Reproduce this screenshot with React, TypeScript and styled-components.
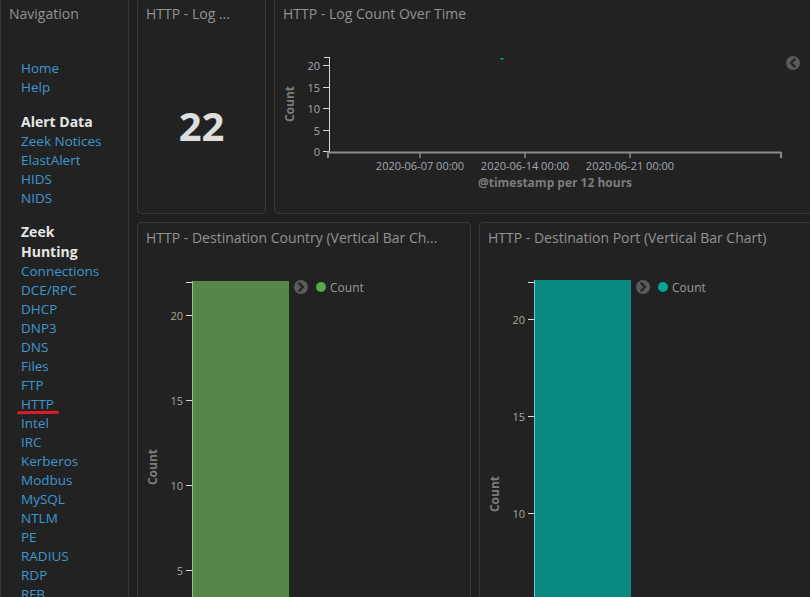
import React from "react";
import styled, { createGlobalStyle } from "styled-components";

const Global = createGlobalStyle`
  html, body { margin: 0; padding: 0; }
  body {
    background: #1f1f1f;
    overflow: hidden;
    font-family: "Open Sans", "DejaVu Sans", sans-serif;
  }
`;

const Dashboard = styled.div`
  display: grid;
  grid-template-columns: 129px 676px;
  column-gap: 8px;
  margin-top: -2px;
  width: 813px;
`;

const Panel = styled.div<{ $h?: number }>`
  box-sizing: border-box;
  background: #222222;
  border: 1px solid #383838;
  border-radius: 4px;
  height: ${(p) => (p.$h ? `${p.$h}px` : "auto")};
  overflow: hidden;
  display: flex;
  flex-direction: column;
  min-width: 0;
`;

const PanelTitle = styled.div`
  flex: none;
  padding: 6px 8px 0;
  line-height: 18px;
  font-size: 14px;
  color: #939393;
  white-space: nowrap;
`;

const NavBody = styled.div`
  padding: 36px 0 0 20px;
  width: 86px;
`;

const NavSection = styled.div`
  & + & {
    margin-top: 14.5px;
  }
`;

const NavHeading = styled.div`
  font-size: 14px;
  font-weight: 700;
  line-height: 20px;
  color: #e6e6e6;
`;

const NavLink = styled.a<{ $marked?: boolean }>`
  display: block;
  width: fit-content;
  position: relative;
  font-size: 13.5px;
  line-height: 19px;
  color: #3d98cf;
  text-decoration: none;
  ${(p) =>
    p.$marked &&
    `
    &::after {
      content: "";
      position: absolute;
      left: -4px;
      top: 15.5px;
      width: 42px;
      height: 2.5px;
      border-radius: 2px;
      background: #d81e2c;
      transform: rotate(-0.6deg);
    }
  `}
`;

const Right = styled.div`
  display: grid;
  grid-template-rows: 216px 400px;
  row-gap: 8px;
`;

const TopRow = styled.div`
  display: grid;
  grid-template-columns: 129px 539px;
  column-gap: 8px;
`;

const BottomRow = styled.div`
  display: grid;
  grid-template-columns: 334px 334px;
  column-gap: 8px;
`;

const MetricBody = styled.div`
  flex: 1;
  display: flex;
  align-items: center;
  justify-content: center;
  padding-top: 16px;
`;

const MetricValue = styled.div`
  font-size: 40px;
  font-weight: 700;
  line-height: 48px;
  color: #dedede;
`;

const ChartSvg = styled.svg`
  display: block;
  flex: none;
  font-family: "Open Sans", "DejaVu Sans", sans-serif;
`;

const navSections: { heading?: string[]; links: string[] }[] = [
  { links: ["Home", "Help"] },
  { heading: ["Alert Data"], links: ["Zeek Notices", "ElastAlert", "HIDS", "NIDS"] },
  {
    heading: ["Zeek Hunting"],
    links: [
      "Connections",
      "DCE/RPC",
      "DHCP",
      "DNP3",
      "DNS",
      "Files",
      "FTP",
      "HTTP",
      "Intel",
      "IRC",
      "Kerberos",
      "Modbus",
      "MySQL",
      "NTLM",
      "PE",
      "RADIUS",
      "RDP",
      "RFB",
      "SIP",
    ],
  },
];

const TICK = "#d8d8d8";
const LABEL_COOL = "#a3a9b2";
const LABEL_WARM = "#b0a698";
const AXIS_TITLE = "#7c7c7c";

function LegendToggle({ x, y, dir }: { x: number; y: number; dir: "left" | "right" }) {
  const d =
    dir === "left"
      ? `M${x + 1.6} ${y - 3.6} L${x - 2} ${y} L${x + 1.6} ${y + 3.6}`
      : `M${x - 1.6} ${y - 3.6} L${x + 2} ${y} L${x - 1.6} ${y + 3.6}`;
  return (
    <g>
      <circle cx={x} cy={y} r={7} fill="#5b5b5b" />
      <path d={d} fill="none" stroke="#262626" strokeWidth={2.4} strokeLinecap="round" strokeLinejoin="round" />
    </g>
  );
}

function LineChart() {
  const yTicks = [
    { v: "20", y: 42 },
    { v: "15", y: 64 },
    { v: "10", y: 85 },
    { v: "5", y: 107 },
    { v: "0", y: 128 },
  ];
  const xTicks = [
    { x: 145, t: "2020-06-07 00:00" },
    { x: 250, t: "2020-06-14 00:00" },
    { x: 355, t: "2020-06-21 00:00" },
  ];
  return (
    <ChartSvg width={537} height={190} viewBox="0 0 537 190">
      <text
        x={14}
        y={81}
        transform="rotate(-90 14 81)"
        textAnchor="middle"
        dominantBaseline="central"
        fontSize={12}
        fontWeight={700}
        fill={AXIS_TITLE}
      >
        Count
      </text>
      <line x1={54.5} y1={34} x2={54.5} y2={129} stroke={TICK} strokeWidth={1} />
      <line x1={49} y1={34.5} x2={54.5} y2={34.5} stroke={TICK} strokeWidth={1} />
      {yTicks.map((t) => (
        <g key={t.v}>
          <line x1={48} y1={t.y + 0.5} x2={54.5} y2={t.y + 0.5} stroke={TICK} strokeWidth={1} />
          <text x={45} y={t.y + 0.5} textAnchor="end" dominantBaseline="central" fontSize={11} fill={LABEL_COOL}>
            {t.v}
          </text>
        </g>
      ))}
      <line x1={52} y1={129.5} x2={506} y2={129.5} stroke="#8a8a8a" strokeWidth={2} />
      <line x1={53} y1={129} x2={53} y2={135} stroke="#8a8a8a" strokeWidth={2} />
      <line x1={506} y1={129} x2={506} y2={135} stroke="#8a8a8a" strokeWidth={2} />
      {xTicks.map((t) => (
        <g key={t.t}>
          <line x1={t.x} y1={129} x2={t.x} y2={135} stroke="#8a8a8a" strokeWidth={1.5} />
          <text x={t.x} y={142} textAnchor="middle" dominantBaseline="central" fontSize={11} fill={LABEL_COOL}>
            {t.t}
          </text>
        </g>
      ))}
      <text x={280} y={159.5} textAnchor="middle" dominantBaseline="central" fontSize={12} fontWeight={700} fill={AXIS_TITLE}>
        @timestamp per 12 hours
      </text>
      <rect x={225.5} y={35} width={3} height={1.5} fill="#00a69b" />
      <LegendToggle x={518} y={40} dir="left" />
    </ChartSvg>
  );
}

function BarChart({
  ticks,
  barTop,
  barColor,
  edgeColor,
  dotColor,
  countY,
}: {
  ticks: { v: string; y: number }[];
  barTop: number;
  barColor: string;
  edgeColor: string;
  dotColor: string;
  countY: number;
}) {
  return (
    <ChartSvg width={332} height={376} viewBox="0 0 332 376">
      <text
        x={14}
        y={countY}
        transform={`rotate(-90 14 ${countY})`}
        textAnchor="middle"
        dominantBaseline="central"
        fontSize={12}
        fontWeight={700}
        fill={AXIS_TITLE}
      >
        Count
      </text>
      <line x1={54.5} y1={34} x2={54.5} y2={376} stroke={TICK} strokeWidth={1} />
      <line x1={48} y1={35.5} x2={54.5} y2={35.5} stroke={TICK} strokeWidth={1} />
      {ticks.map((t) => (
        <g key={t.v}>
          <line x1={48} y1={t.y + 0.5} x2={54.5} y2={t.y + 0.5} stroke={TICK} strokeWidth={1} />
          <text x={45} y={t.y + 0.5} textAnchor="end" dominantBaseline="central" fontSize={11} fill={LABEL_WARM}>
            {t.v}
          </text>
        </g>
      ))}
      <rect x={54} y={barTop} width={97} height={376 - barTop} fill={barColor} />
      <line x1={54.5} y1={barTop} x2={54.5} y2={376} stroke={edgeColor} strokeWidth={1} />
      <LegendToggle x={163} y={40} dir="right" />
      <circle cx={183} cy={40} r={5} fill={dotColor} />
      <text x={192} y={40} dominantBaseline="central" fontSize={12} fill="#9a9a9a">
        Count
      </text>
    </ChartSvg>
  );
}

export default function App() {
  return (
    <>
      <Global />
      <Dashboard>
        <Panel $h={640}>
          <PanelTitle>Navigation</PanelTitle>
          <NavBody>
            {navSections.map((s, i) => (
              <NavSection key={i}>
                {s.heading && s.heading.map((h) => <NavHeading key={h}>{h}</NavHeading>)}
                {s.links.map((l) => (
                  <NavLink key={l} href="#" $marked={l === "HTTP"}>
                    {l}
                  </NavLink>
                ))}
              </NavSection>
            ))}
          </NavBody>
        </Panel>
        <Right>
          <TopRow>
            <Panel>
              <PanelTitle>HTTP - Log ...</PanelTitle>
              <MetricBody>
                <MetricValue>22</MetricValue>
              </MetricBody>
            </Panel>
            <Panel>
              <PanelTitle>HTTP - Log Count Over Time</PanelTitle>
              <LineChart />
            </Panel>
          </TopRow>
          <BottomRow>
            <Panel>
              <PanelTitle>HTTP - Destination Country (Vertical Bar Ch...</PanelTitle>
              <BarChart
                ticks={[
                  { v: "20", y: 68 },
                  { v: "15", y: 153 },
                  { v: "10", y: 238 },
                  { v: "5", y: 323 },
                ]}
                barTop={34}
                barColor="#558748"
                edgeColor="#93c285"
                dotColor="#5aa84c"
                countY={220}
              />
            </Panel>
            <Panel>
              <PanelTitle>HTTP - Destination Port (Vertical Bar Chart)</PanelTitle>
              <BarChart
                ticks={[
                  { v: "20", y: 72 },
                  { v: "15", y: 169 },
                  { v: "10", y: 266 },
                ]}
                barTop={33}
                barColor="#088a80"
                edgeColor="#6fd0c6"
                dotColor="#00a69b"
                countY={247}
              />
            </Panel>
          </BottomRow>
        </Right>
      </Dashboard>
    </>
  );
}
